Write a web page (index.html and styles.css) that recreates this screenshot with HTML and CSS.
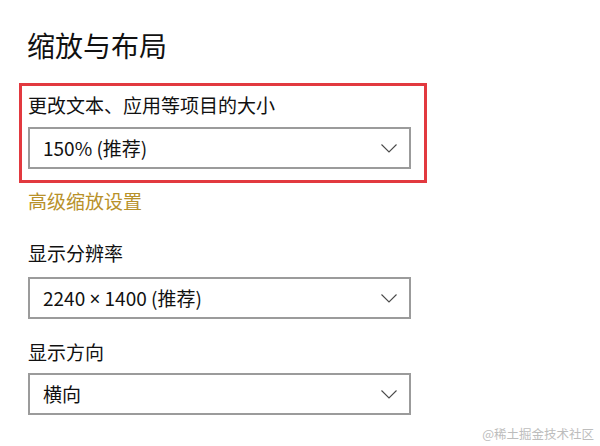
FILE: index.html
```html
<!DOCTYPE html>
<html lang="zh-CN">
<head>
<meta charset="utf-8">
<title>缩放与布局</title>
<link rel="stylesheet" href="styles.css">
</head>
<body>
<main class="page">
  <h1 class="title">缩放与布局</h1>

  <section class="highlight">
    <div class="label">更改文本、应用等项目的大小</div>
    <div class="combo">
      <span class="combo-text">150% (推荐)</span>
      <svg class="chevron" width="16" height="9" viewBox="0 0 16 9"><path d="M0.5 0.5 L8 8 L15.5 0.5" fill="none" stroke="#4a4a4a" stroke-width="1.1"/></svg>
    </div>
  </section>

  <a class="link">高级缩放设置</a>

  <div class="label label-res">显示分辨率</div>
  <div class="combo">
    <span class="combo-text">2240 <span class="times">×</span> 1400 (推荐)</span>
    <svg class="chevron" width="16" height="9" viewBox="0 0 16 9"><path d="M0.5 0.5 L8 8 L15.5 0.5" fill="none" stroke="#4a4a4a" stroke-width="1.1"/></svg>
  </div>

  <div class="label label-dir">显示方向</div>
  <div class="combo">
    <span class="combo-text">横向</span>
    <svg class="chevron" width="16" height="9" viewBox="0 0 16 9"><path d="M0.5 0.5 L8 8 L15.5 0.5" fill="none" stroke="#4a4a4a" stroke-width="1.1"/></svg>
  </div>
</main>
<div class="watermark">@稀土掘金技术社区</div>
</body>
</html>
```
FILE: styles.css
```css
html, body {
  margin: 0;
  padding: 0;
  background: #ffffff;
}

body {
  width: 600px;
  height: 446px;
  overflow: hidden;
  position: relative;
  font-family: "Noto Sans CJK SC", "Noto Sans", sans-serif;
  color: #000000;
}

.page {
  padding: 27px 0 0 28px;
  display: flex;
  flex-direction: column;
  align-items: flex-start;
}

.title {
  margin: 0 0 0 -1px;
  font-size: 28px;
  line-height: 36px;
  font-weight: 400;
  color: #111111;
}

.highlight {
  margin: 20px 0 0 -9px;
  border: 3px solid #e2393f;
  padding: 6px 13px 11px 6px;
  display: flex;
  flex-direction: column;
}

.label {
  font-size: 19px;
  line-height: 26px;
  color: #111111;
  margin-bottom: 9px;
}

.label-res {
  margin-top: 26px;
  margin-bottom: 11px;
}

.label-dir {
  margin-top: 20px;
  margin-bottom: 8px;
}

.combo {
  box-sizing: border-box;
  width: 383px;
  height: 42px;
  border: 2px solid #9b9b9b;
  padding: 0 12px 0 13px;
  display: flex;
  align-items: center;
  justify-content: space-between;
}

.combo-text {
  font-size: 19px;
  line-height: 26px;
  color: #111111;
}

.times {
  font-family: "Noto Sans", sans-serif;
}

.chevron {
  display: block;
}

.link {
  margin-top: 5px;
  font-size: 19px;
  line-height: 26px;
  color: #b8912a;
  text-decoration: none;
}

.watermark {
  position: absolute;
  right: 6px;
  bottom: 4px;
  font-size: 12.5px;
  line-height: 16px;
  color: #bdbdbd;
  text-shadow: 0 0 1px #ffffff;
}
```
